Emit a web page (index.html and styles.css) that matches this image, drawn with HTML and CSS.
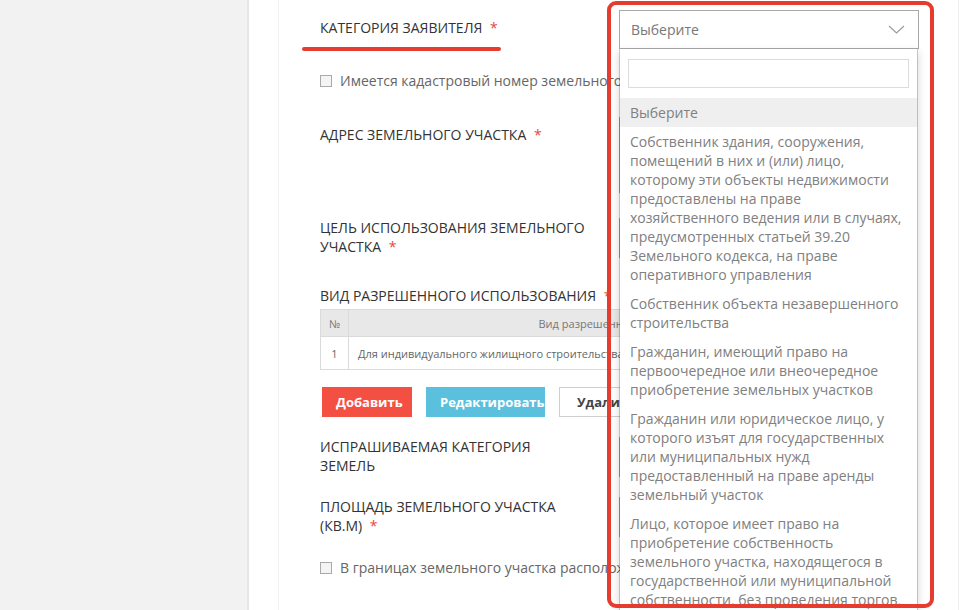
FILE: index.html
```html
<!DOCTYPE html>
<html lang="ru">
<head>
  <meta charset="UTF-8" />
  <title>Заявление</title>
  <link rel="stylesheet" href="styles.css">
</head>
<body>
  <div class="layout">
    <aside class="sidebar"></aside>

    <main class="main">
      <div class="card">
        <form class="form">

          <!-- Категория заявителя -->
          <div class="row">
            <label class="label">Категория заявителя <span class="req">*</span></label>
            <div class="control select-wrap">
              <div class="select">
                <span>Выберите</span>
                <svg class="chevron" width="17" height="9" viewBox="0 0 17 9">
                  <polyline points="1,1 8.5,8 16,1" fill="none" stroke="#9a9a9a" stroke-width="1.1" />
                </svg>
              </div>

              <div class="dropdown">
                <div class="dropdown-search">
                  <input type="text" class="search-input">
                </div>
                <ul class="options">
                  <li class="option option--active">Выберите</li>
                  <li class="option">Собственник здания, сооружения, помещений в них и (или) лицо, которому эти объекты недвижимости предоставлены на праве хозяйственного ведения или в случаях, предусмотренных статьей 39.20 Земельного кодекса, на праве оперативного управления</li>
                  <li class="option">Собственник объекта незавершенного строительства</li>
                  <li class="option">Гражданин, имеющий право на первоочередное или внеочередное приобретение земельных участков</li>
                  <li class="option">Гражданин или юридическое лицо, у которого изъят для государственных или муниципальных нужд предоставленный на праве аренды земельный участок</li>
                  <li class="option">Лицо, которое имеет право на приобретение собственность земельного участка, находящегося в государственной или муниципальной собственности, без проведения торгов, в случаях, предусмотренных законом</li>
                </ul>
              </div>
            </div>
          </div>

          <label class="check-row check-row--first">
            <span class="checkbox"></span>
            Имеется кадастровый номер земельного участка
          </label>

          <!-- Адрес -->
          <div class="row row--address">
            <label class="label">Адрес земельного участка <span class="req">*</span></label>
            <div class="control"><div class="textarea"></div></div>
          </div>

          <!-- Цель использования -->
          <div class="row row--purpose">
            <label class="label label--wrap">Цель использования земельного участка <span class="req">*</span></label>
            <div class="control"><div class="input"></div></div>
          </div>

          <!-- Вид разрешенного использования -->
          <div class="block-label">Вид разрешенного использования <span class="req">*</span></div>
          <table class="grid">
            <thead>
              <tr>
                <th class="col-num">№</th>
                <th>Вид разрешенного использования</th>
              </tr>
            </thead>
            <tbody>
              <tr>
                <td class="col-num">1</td>
                <td>Для индивидуального жилищного строительства</td>
              </tr>
            </tbody>
          </table>

          <div class="buttons">
            <button type="button" class="btn btn--add">Добавить</button>
            <button type="button" class="btn btn--edit">Редактировать</button>
            <button type="button" class="btn btn--delete">Удалить</button>
          </div>

          <div class="row row--category">
            <label class="label label--wrap">Испрашиваемая категория земель</label>
            <div class="control"><div class="input"></div></div>
          </div>

          <div class="row row--area">
            <label class="label label--wrap">Площадь земельного участка (кв.м) <span class="req">*</span></label>
            <div class="control"><div class="input"></div></div>
          </div>

          <label class="check-row check-row--last">
            <span class="checkbox"></span>
            В границах земельного участка расположены объекты недвижимости
          </label>

        </form>
      </div>
    </main>
  </div>

  <!-- пометки поверх скриншота -->
  <div class="mark-underline"></div>
  <div class="mark-box"></div>
</body>
</html>
```

FILE: styles.css
```css
html, body {
  margin: 0;
  height: 610px;
  overflow: hidden;
}

body {
  background: #fff;
  color: #333;
  font-family: "Open Sans", Arial, sans-serif;
  font-size: 14px;
  position: relative;
}

.layout {
  display: flex;
  height: 100%;
}

.sidebar {
  width: 247px;
  flex-shrink: 0;
  background: #f2f2f2;
  border-right: 2px solid #e6e6e6;
}

.main {
  flex: 1;
  padding: 0 8px 0 29px;
}

.card {
  height: 100%;
  border-left: 1px solid #f0f0f0;
  border-right: 1px solid #ededed;
  padding-left: 41px;
}

.form {
  width: 597px;
  padding-top: 10px;
}

/* строки формы */
.row {
  display: grid;
  grid-template-columns: 266px 298px;
  column-gap: 33px;
  align-items: start;
}

.label {
  text-transform: uppercase;
  line-height: 19px;
  padding-top: 8px;
  color: #333;
}

.label--wrap {
  padding-top: 0;
}

.req {
  color: #e8473b;
  margin-left: 4px;
}

.control {
  position: relative;
}

.input,
.textarea,
.select {
  box-sizing: border-box;
  border: 1px solid #a8a8a8;
  background: #fff;
}

.input {
  height: 40px;
}

.textarea {
  height: 76px;
}

.select {
  height: 39px;
  width: 300px;
  padding: 0 11px;
  display: flex;
  align-items: center;
  justify-content: space-between;
  color: #777;
}

.chevron {
  margin-right: 2px;
}

/* выпадающий список */
.dropdown {
  position: absolute;
  top: 39px;
  left: 0;
  width: 299px;
  box-sizing: border-box;
  background: #fff;
  background-clip: padding-box;
  border: 1px solid rgba(0, 0, 0, 0.18);
  border-top: none;
  box-shadow: 0 3px 8px rgba(0, 0, 0, 0.16);
  z-index: 5;
}

.dropdown-search {
  padding: 10px 8px 10px 8px;
}

.search-input {
  display: block;
  box-sizing: border-box;
  width: 100%;
  height: 29px;
  margin: 0;
  border: 1px solid #dcdcdc;
  outline: none;
}

.options {
  list-style: none;
  margin: 0;
  padding: 0;
}

.option {
  padding: 5px 11px 5px 10px;
  line-height: 19px;
  color: #808080;
}

.option--active {
  background: #efefef;
}

/* чекбоксы */
.check-row {
  display: flex;
  align-items: center;
  line-height: 19px;
  color: #666;
  white-space: nowrap;
}

.checkbox {
  width: 10px;
  height: 10px;
  border: 1px solid #a9a9a9;
  background: #f4f4f4;
  margin-right: 8px;
  flex-shrink: 0;
}

.check-row--first { margin-top: 22px; }
.row--address { margin-top: 27px; }
.row--purpose { margin-top: 25px; }

.block-label {
  margin-top: 28px;
  text-transform: uppercase;
  line-height: 19px;
}

/* таблица */
.grid {
  width: 100%;
  margin-top: 4px;
  border-collapse: collapse;
  font-size: 11px;
}

.grid th,
.grid td {
  border: 1px solid #dadada;
  font-weight: normal;
}

.grid th {
  height: 26px;
  background: #e8e8e8;
  color: #777;
  padding: 0;
}

.grid td {
  height: 32px;
  color: #666;
  padding: 0 9px;
}

.grid .col-num {
  width: 27px;
  padding: 0;
  text-align: center;
}

/* кнопки */
.buttons {
  display: flex;
  gap: 14px;
  margin-top: 17px;
  padding-left: 2px;
}

.btn {
  height: 30px;
  padding: 0 14px;
  border: none;
  font-family: "Open Sans", Arial, sans-serif;
  font-size: 13px;
  font-weight: bold;
  color: #fff;
  cursor: pointer;
}

.btn--add {
  background: #f44f43;
  width: 90px;
}

.btn--edit {
  background: #5bc0de;
  width: 119px;
}

.btn--delete {
  background: #fff;
  border: 1px solid #cfcfcf;
  color: #444;
  padding: 0 17px;
}

.row--category { margin-top: 20px; }
.row--area { margin-top: 20px; }
.check-row--last { margin-top: 21px; }

/* красные пометки */
.mark-underline {
  position: absolute;
  left: 302px;
  top: 47px;
  width: 199px;
  height: 4px;
  border-radius: 2px;
  background: #e63c30;
  z-index: 10;
}

.mark-box {
  position: absolute;
  left: 607px;
  top: 1px;
  width: 327px;
  height: 607px;
  box-sizing: border-box;
  border: 4px solid #e63c30;
  border-radius: 9px;
  z-index: 10;
}
```
